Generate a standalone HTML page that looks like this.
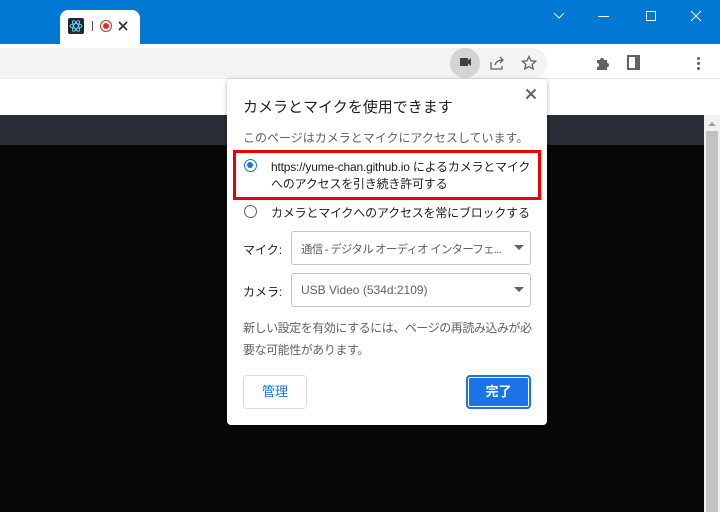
<!DOCTYPE html><html><head><meta charset="utf-8"><style>
*{margin:0;padding:0;box-sizing:border-box}
body{width:720px;height:512px;overflow:hidden;position:relative;background:#080808;font-family:"Liberation Sans","Noto Sans CJK JP",sans-serif}
.a{position:absolute}
svg{display:block}
.t{font-size:12px;color:#202124;white-space:nowrap}
.s{font-size:12px;color:#5f6368;white-space:nowrap}
</style></head><body>
<div class="a" style="left:0;top:0;width:720px;height:44px;background:#0078d4"></div>
<div class="a" style="left:60px;top:10px;width:80px;height:34px;background:#fff;border-radius:8px 8px 0 0"></div>
<div class="a" style="left:68px;top:18px;width:16px;height:16px;background:#23272f;border-radius:2px"><svg width="16" height="16" viewBox="0 0 16 16" fill="none" stroke="#61dafb" stroke-width=".9"><ellipse cx="8" cy="8" rx="6" ry="2.3"/><ellipse cx="8" cy="8" rx="6" ry="2.3" transform="rotate(60 8 8)"/><ellipse cx="8" cy="8" rx="6" ry="2.3" transform="rotate(-60 8 8)"/></svg></div>
<div class="a" style="left:92px;top:21px;width:1px;height:10px;background:#555"></div>
<div class="a" style="left:100px;top:20px;width:12px;height:12px;border-radius:50%;border:1.5px solid #d93025;background:#fff"><div style="margin:1.5px;width:6px;height:6px;border-radius:50%;background:#d93025"></div></div>
<svg class="a" style="left:118px;top:21px" width="10" height="10"><path d="M1 1l8 8M9 1L1 9" stroke="#333" stroke-width="1.8"/></svg>
<svg class="a" style="left:552px;top:11px" width="14" height="10"><path d="M2 2l5 5 5-5" stroke="#fff" fill="none"/></svg>
<div class="a" style="left:598px;top:16px;width:11px;height:1px;background:#fff"></div>
<div class="a" style="left:646px;top:11px;width:10px;height:10px;border:1px solid #fff"></div>
<svg class="a" style="left:690px;top:10px" width="12" height="12"><path d="M1 1l10 10M11 1L1 11" stroke="#fff"/></svg>
<div class="a" style="left:0;top:44px;width:720px;height:34px;background:#fff"></div>
<div class="a" style="left:-20px;top:48px;width:567px;height:30px;background:#f1f3f4;border-radius:15px"></div>
<div class="a" style="left:450px;top:48px;width:30px;height:30px;border-radius:50%;background:#d3d4d6"></div>
<div class="a" style="left:460px;top:58px;width:8px;height:8px;background:#3c4043"></div>
<svg class="a" style="left:466px;top:58px" width="5" height="8"><path d="M0 4L5 0V8Z" fill="#3c4043"/></svg>
<svg class="a" style="left:489px;top:55px" width="16" height="16" fill="none" stroke="#5f6368" stroke-width="1.3"><path d="M2 7v7h11v-3M6 10c1-4 4-5 8-5M11 2l3 3-3 3"/></svg>
<svg class="a" style="left:521px;top:55px" width="16" height="16"><path d="M8 1.5l2 4.3 4.6.5-3.4 3.1 1 4.6L8 11.6 3.8 14l1-4.6L1.4 6.3 6 5.8z" fill="none" stroke="#5f6368" stroke-width="1.3"/></svg>
<svg class="a" style="left:594px;top:55px" width="16" height="16"><path d="M3 5h3a2 2 0 014 0h3v3a2 2 0 010 4v3H3v-3a2 2 0 000-4z" fill="#5f6368"/></svg>
<div class="a" style="left:627px;top:55px;width:13px;height:15px;border:2px solid #5f6368;border-right-width:5px"></div>
<div class="a" style="left:697px;top:57px;width:3px;height:3px;background:#5f6368;border-radius:50%;box-shadow:0 5px #5f6368,0 10px #5f6368"></div>
<div class="a" style="left:0;top:78px;width:720px;height:37px;background:#fff;border-top:1px solid #e8e8e8"></div>
<div class="a" style="left:0;top:115px;width:704px;height:30px;background:#292d36"></div>
<div class="a" style="left:704px;top:115px;width:16px;height:397px;background:#f0f0f0"></div>
<div class="a" style="left:706px;top:131px;width:12px;height:381px;background:#c1c1c1"></div>
<svg class="a" style="left:707px;top:120px" width="10" height="6"><path d="M1 6l4-4 4 4z" fill="#a3a3a3"/></svg>
<div class="a" style="left:227px;top:79px;width:320px;height:346px;background:#fff;border-radius:4px;box-shadow:0 1px 4px rgba(0,0,0,.35)"></div>
<svg class="a" style="left:525px;top:88px" width="12" height="12"><path d="M1.5 1.5l9 9M10.5 1.5l-9 9" stroke="#5f6368" stroke-width="2"/></svg>
<div class="a" style="left:243px;top:96px;font-size:15px;color:#202124">カメラとマイクを使用できます</div>
<div class="a s" style="left:243px;top:129px">このページはカメラとマイクにアクセスしています。</div>
<div class="a" style="left:233px;top:150px;width:308px;height:50px;border:3px solid #e00"></div>
<div class="a" style="left:244px;top:159px;width:13px;height:13px;border-radius:50%;border:1.5px solid #1a73e8"><div style="margin:2px;width:6px;height:6px;border-radius:50%;background:#1a73e8"></div></div>
<div class="a t" style="left:271px;top:159px;line-height:17px;letter-spacing:-0.2px">https://yume-chan.github.io によるカメラとマイク<br>へのアクセスを引き続き許可する</div>
<div class="a" style="left:244px;top:205px;width:13px;height:13px;border-radius:50%;border:1.5px solid #5f6368"></div>
<div class="a t" style="left:271px;top:204px;letter-spacing:-0.2px">カメラとマイクへのアクセスを常にブロックする</div>
<div class="a t" style="left:243px;top:241px">マイク:</div>
<div class="a" style="left:291px;top:231px;width:240px;height:34px;border:1px solid #c4c7c5;border-radius:3px"></div>
<div class="a s" style="left:301px;top:241px;font-size:11.5px;letter-spacing:-0.8px">通信 - デジタル オーディオ インターフェ...</div>
<svg class="a" style="left:514px;top:245px" width="10" height="6"><path d="M0 0h10L5 5z" fill="#5f6368"/></svg>
<div class="a t" style="left:243px;top:283px">カメラ:</div>
<div class="a" style="left:291px;top:273px;width:240px;height:34px;border:1px solid #c4c7c5;border-radius:3px"></div>
<div class="a s" style="left:301px;top:283px">USB Video (534d:2109)</div>
<svg class="a" style="left:514px;top:287px" width="10" height="6"><path d="M0 0h10L5 5z" fill="#5f6368"/></svg>
<div class="a s" style="left:243px;top:317px;line-height:22px;letter-spacing:-0.45px">新しい設定を有効にするには、ページの再読み込みが必<br>要な可能性があります。</div>
<div class="a" style="left:243px;top:375px;width:64px;height:34px;border:1px solid #dadce0;border-radius:4px;color:#1a73e8;font-size:13px;text-align:center;line-height:32px">管理</div>
<div class="a" style="left:466px;top:375px;width:65px;height:34px;border:2px solid #1a73e8;border-radius:4px;background:#1a73e8;box-shadow:inset 0 0 0 1px #fff;color:#fff;font-size:13px;text-align:center;line-height:30px;font-weight:bold">完了</div>
</body></html>
